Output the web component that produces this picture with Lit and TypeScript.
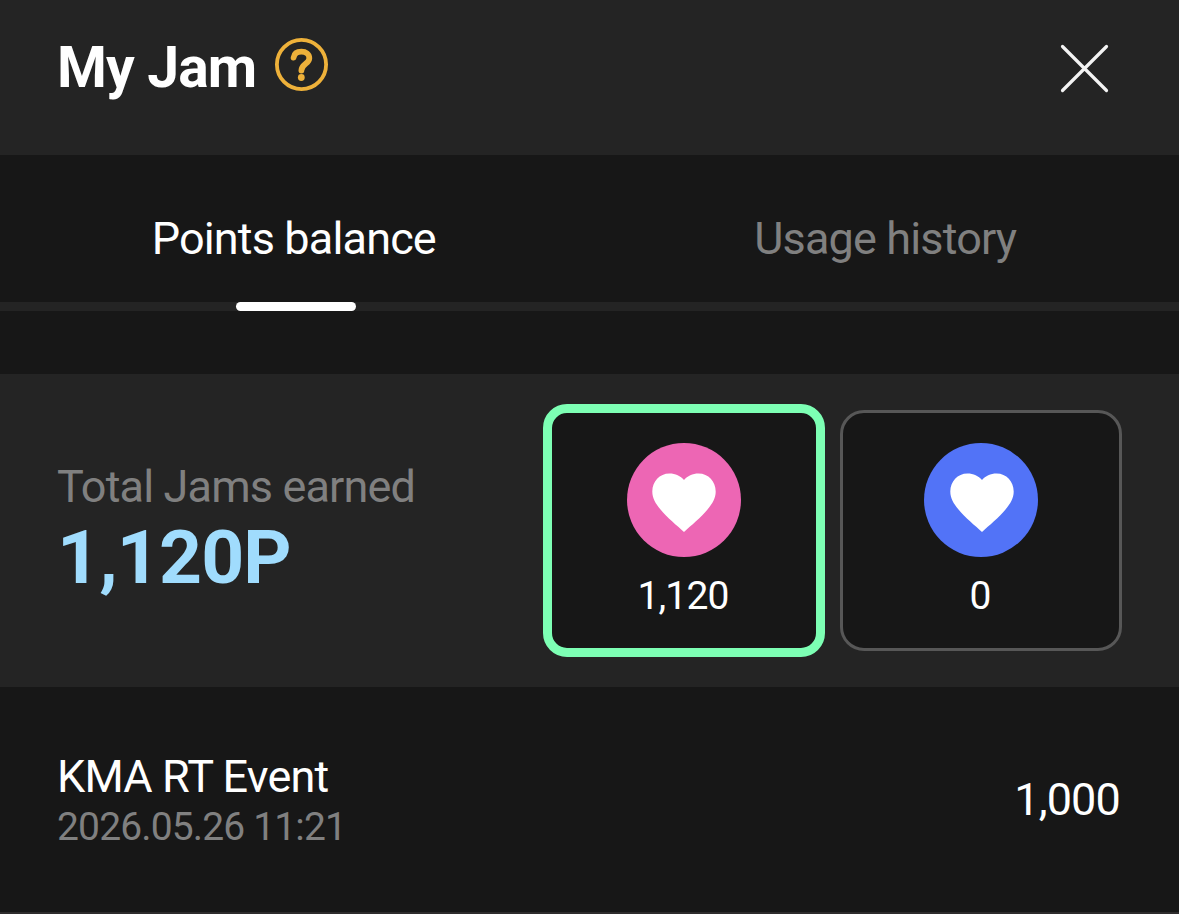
import { LitElement, html, css } from 'lit';
import { customElement, property, state } from 'lit/decorators.js';
import { classMap } from 'lit/directives/class-map.js';

interface JamEntry {
  title: string;
  date: string;
  amount: number;
}

const format = (value: number) => value.toLocaleString('en-US');

@customElement('jam-card')
class JamCard extends LitElement {
  static styles = css`
    :host {
      display: block;
    }
    .card {
      box-sizing: border-box;
      width: 282px;
      padding: 30px 0 29px;
      display: flex;
      flex-direction: column;
      align-items: center;
      gap: 16px;
      background: #171717;
      border: 3px solid #575757;
      border-radius: 24px;
    }
    .card.selected {
      border: 9px solid #7dffb4;
    }
    svg {
      display: block;
      width: 114px;
      height: 114px;
    }
    .heart {
      fill: #fff;
    }
    .blue + .heart {
      transform: translateX(1px);
    }
    .pink {
      fill: #ed66b4;
    }
    .blue {
      fill: #5273f7;
    }
    .count {
      padding-right: 2px;
      font-size: 39px;
      line-height: 46px;
      color: #fff;
    }
  `;

  @property() kind = 'pink';
  @property({ type: Number }) count = 0;
  @property({ type: Boolean }) selected = false;

  render() {
    return html`
      <div class=${classMap({ card: true, selected: this.selected })}>
        <svg viewBox="0 0 114 114">
          <circle class=${this.kind} cx="57" cy="57" r="57"></circle>
          <path class="heart" d="M57 89 C50 82.500 40 74.500 33.500 66.500 C28.500 60.500 25.300 55 25.300 48.500 C25.300 38.500 32.500 30.500 42.500 30.500 C48.500 30.500 53.500 33 57 37 C60.500 33 65.500 30.500 71.500 30.500 C81.500 30.500 88.700 38.500 88.700 48.500 C88.700 55 85.500 60.500 80.500 66.500 C74 74.500 64 82.500 57 89 Z"></path>
        </svg>
        <div class="count">${format(this.count)}</div>
      </div>
    `;
  }
}

@customElement('app-root')
class AppRoot extends LitElement {
  static styles = css`
    :host {
      display: flex;
      flex-direction: column;
      height: 100vh;
      overflow: hidden;
      background: #171717;
      color: #fff;
      font-family: Roboto, sans-serif;
      letter-spacing: -0.85px;
    }
    .header {
      box-sizing: border-box;
      height: 155px;
      padding: 34px 70px 0 57px;
      display: flex;
      justify-content: space-between;
      align-items: flex-start;
      background: #242424;
    }
    .heading {
      display: flex;
      gap: 19px;
    }
    h1 {
      margin: 0;
      font-size: 57px;
      line-height: 67px;
      font-weight: 700;
    }
    .help {
      width: 53px;
      height: 53px;
      margin-top: 4px;
    }
    .close {
      width: 49px;
      height: 49px;
      margin-top: 10px;
    }
    .tabs {
      display: grid;
      grid-template-columns: 1fr 1fr;
      border-bottom: 9px solid #242424;
    }
    .tab {
      position: relative;
      padding: 57px 0 37px 2px;
      text-align: center;
      font-size: 45px;
      line-height: 53px;
      color: #808080;
    }
    .tab.active {
      padding: 57px 2px 37px 0;
      color: #fff;
    }
    .tab.active::after {
      content: '';
      position: absolute;
      left: 50%;
      bottom: -9px;
      width: 120px;
      height: 9px;
      margin-left: -59px;
      border-radius: 5px;
      background: #fff;
    }
    .summary {
      margin-top: 63px;
      padding: 30px 57px;
      display: flex;
      justify-content: space-between;
      align-items: center;
      background: #242424;
    }
    .label {
      font-size: 45px;
      line-height: 53px;
      color: #808080;
    }
    .total {
      font-size: 75px;
      line-height: 88px;
      font-weight: 700;
      color: #a0dcfd;
    }
    .cards {
      display: flex;
      align-items: center;
      gap: 15px;
    }
    .entry {
      box-sizing: border-box;
      height: 227px;
      padding: 0 59px 0 57px;
      display: flex;
      justify-content: space-between;
      align-items: center;
      border-bottom: 2px solid #2e2c2d;
    }
    .title, .amount {
      font-size: 45px;
      line-height: 53px;
    }
    .date {
      padding-top: 1px;
      font-size: 39px;
      line-height: 46px;
      color: #808080;
    }
  `;

  @state() tab = 0;
  @state() selected = 'pink';

  balances: Record<string, number> = { pink: 1120, blue: 0 };

  entries: JamEntry[] = [
    { title: 'KMA RT Event', date: '2026.05.26 11:21', amount: 1000 },
  ];

  render() {
    const total = Object.values(this.balances).reduce((a, b) => a + b, 0);
    return html`
      <div class="header">
        <div class="heading">
          <h1>My Jam</h1>
          <svg class="help" viewBox="0 0 53 53" fill="none" stroke="#eeb13a">
            <circle cx="26.500" cy="26.500" r="24.600" stroke-width="3.800"></circle>
            <path d="M18.600 19.600 C19.200 15.800 22.200 13.700 26.400 13.700 C31 13.700 34.300 16.300 34.300 20.300 C34.300 25.800 26.400 26 26.400 32.600" stroke-width="5.800" stroke-linecap="round"></path>
            <circle cx="26.300" cy="39.500" r="3.400" fill="#eeb13a" stroke="none"></circle>
          </svg>
        </div>
        <svg class="close" viewBox="0 0 49 49" fill="none" stroke="#f4f4f4" stroke-width="3.200" stroke-linecap="round">
          <path d="M2.500 2.500 L46.500 46.500 M46.500 2.500 L2.500 46.500"></path>
        </svg>
      </div>
      <div class="tabs">
        ${['Points balance', 'Usage history'].map((name, i) => html`
          <div class=${classMap({ tab: true, active: this.tab === i })} @click=${() => (this.tab = i)}>${name}</div>
        `)}
      </div>
      <div class="summary">
        <div>
          <div class="label">Total Jams earned</div>
          <div class="total">${format(total)}P</div>
        </div>
        <div class="cards">
          ${Object.entries(this.balances).map(([kind, count]) => html`
            <jam-card
              .kind=${kind}
              .count=${count}
              .selected=${this.selected === kind}
              @click=${() => (this.selected = kind)}
            ></jam-card>
          `)}
        </div>
      </div>
      ${this.entries.map(entry => html`
        <div class="entry">
          <div>
            <div class="title">${entry.title}</div>
            <div class="date">${entry.date}</div>
          </div>
          <div class="amount">${format(entry.amount)}</div>
        </div>
      `)}
    `;
  }
}
